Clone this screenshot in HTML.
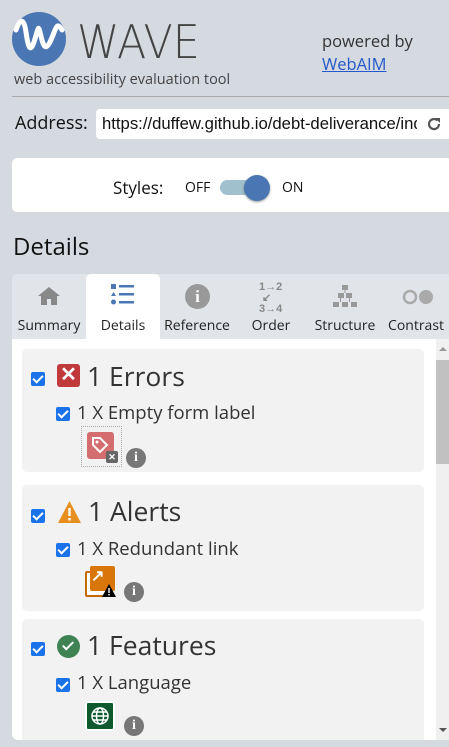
<!DOCTYPE html>
<html><head><style>
*{margin:0;padding:0;box-sizing:border-box}
body{width:449px;height:747px;overflow:hidden;background:#d5d9e0;font-family:"Open Sans","DejaVu Sans","Liberation Sans",sans-serif;color:#333;position:relative}
.a{position:absolute}
.cb{position:absolute;width:14px;height:14px;background:#1a73e8;border-radius:2px}
.cb:after{content:"";position:absolute;left:4px;top:1px;width:4px;height:8px;border:solid #fff;border-width:0 2px 2px 0;transform:rotate(45deg)}
.card{position:absolute;left:10px;width:402px;background:#f2f2f2;border-radius:5px}
.h{position:absolute;font-size:26.5px;color:#333}
.s{position:absolute;font-size:18.5px;color:#333}
.info{position:absolute;width:20px;height:20px;border-radius:50%;background:#777;color:#fff;font:bold 14px "Liberation Serif",serif;text-align:center;line-height:20px}
.tab{position:absolute;top:274px;height:65px;font-size:14px;text-align:center;color:#222}
.tab span{position:absolute;left:0;right:0;top:42px}
#c{position:absolute;left:12px;top:339px;width:424px;height:401px;background:#fff;border-radius:0 0 0 6px;overflow:hidden}
#c>*{margin-top:-339px}
</style></head><body>
<svg class="a" style="left:12px;top:12px" width="54" height="54" viewBox="0 0 54 54"><circle cx="27" cy="27" r="27" fill="#4a77b4"/><path d="M4 18 C8 6 12 6 14 20 S18 42 22 30 S26 12 28 20 S32 42 38 30 S44 8 50 18" stroke="#fff" stroke-width="5" fill="none" stroke-linecap="round"/></svg>
<div class="a" style="left:77px;top:15px;font-size:46px;color:#444;font-family:'DejaVu Sans','Liberation Sans',sans-serif;font-weight:200;transform:scaleX(0.93);transform-origin:left">WAVE</div>
<div class="a" style="left:14px;top:70px;font-size:14.5px;color:#444">web accessibility evaluation tool</div>
<div class="a" style="left:322px;top:29px;font-size:16.5px;color:#333">powered by</div>
<div class="a" style="left:322px;top:52px;font-size:16.5px;color:#2558c8;text-decoration:underline">WebAIM</div>
<div class="a" style="left:12px;top:96px;width:437px;height:1px;background:#aaa"></div>
<div class="a" style="left:15px;top:111px;font-size:18px;color:#111">Address:</div>
<div class="a" style="left:96px;top:109px;width:360px;height:30px;background:#fff;border-radius:4px"></div>
<div class="a" style="left:102px;top:114px;width:315px;overflow:hidden;white-space:nowrap;font:16.7px 'Liberation Sans',sans-serif;color:#111">https://duffew.github.io/debt-deliverance/index</div>
<svg class="a" style="left:426px;top:116px" width="16" height="16" viewBox="0 0 16 16"><path d="M13 8 A5 5 0 1 1 11.5 4.5" fill="none" stroke="#555" stroke-width="2.2"/><path d="M9 2 H14 V7Z" fill="#555"/></svg>
<div class="a" style="left:12px;top:158px;width:440px;height:54px;background:#fff;border-radius:5px"></div>
<div class="a" style="left:113px;top:176px;font-size:17px;color:#111">Styles:</div>
<div class="a" style="left:185px;top:178px;font-size:14px;color:#111">OFF</div>
<div class="a" style="left:220px;top:180px;width:46px;height:15px;background:#9fc0cc;border-radius:8px"></div>
<div class="a" style="left:244px;top:175px;width:26px;height:26px;background:#4a77b4;border-radius:50%;box-shadow:0 1px 2px rgba(0,0,0,.4)"></div>
<div class="a" style="left:282px;top:178px;font-size:14px;color:#111">ON</div>
<div class="a" style="left:13px;top:230px;font-size:24px;color:#111">Details</div>
<div class="a" style="left:12px;top:274px;width:437px;height:65px;background:#e1e4e9;border-radius:5px 0 0 0"></div>
<div class="a" style="left:86px;top:274px;width:74px;height:66px;background:#fff;border-radius:5px 5px 0 0"></div>
<div class="tab" style="left:12px;width:74px"><svg class="a" style="left:25px;top:12px" width="24" height="20" viewBox="0 0 24 20"><path d="M12 1 L1 10 H4 V19 H10 V13 H14 V19 H20 V10 H23Z" fill="#888"/></svg><span>Summary</span></div>
<div class="tab" style="left:86px;width:74px"><svg class="a" style="left:24px;top:9px" width="26" height="24" viewBox="0 0 26 24"><rect x="1" y="1" width="5" height="5" fill="#4a77b4"/><path d="M3.5 9 L6 13 H1Z" fill="#4a77b4"/><circle cx="3.5" cy="19" r="2.5" fill="#4a77b4"/><rect x="9" y="2" width="15" height="2.5" fill="#4a77b4"/><rect x="9" y="10" width="15" height="2.5" fill="#4a77b4"/><rect x="9" y="18" width="15" height="2.5" fill="#4a77b4"/></svg><span>Details</span></div>
<div class="tab" style="left:160px;width:74px"><div class="info" style="left:25px;top:10px;width:25px;height:25px;line-height:25px;background:#999;font-size:17px">i</div><span>Reference</span></div>
<div class="tab" style="left:234px;width:74px"><div class="a" style="left:25px;top:8px;font:bold 11px 'Liberation Sans',sans-serif;color:#888;line-height:11px;text-align:left">1&rarr;2<br>&nbsp;&#x2199;<br>3&rarr;4</div><span>Order</span></div>
<div class="tab" style="left:308px;width:74px"><svg class="a" style="left:24px;top:11px" width="26" height="24" viewBox="0 0 26 24"><g fill="#999"><rect x="10" y="0" width="6" height="5"/><rect x="6" y="8" width="6" height="5"/><rect x="14" y="8" width="6" height="5"/><rect x="1" y="17" width="6" height="5"/><rect x="10" y="17" width="6" height="5"/><rect x="19" y="17" width="6" height="5"/><rect x="12.5" y="5" width="1" height="3"/><rect x="8" y="13" width="1" height="4"/><rect x="17" y="13" width="1" height="4"/></g></svg><span>Structure</span></div>
<div class="tab" style="left:382px;width:80px;text-align:left"><svg class="a" style="left:20px;top:15px" width="32" height="16"><circle cx="8" cy="8" r="6" fill="none" stroke="#aaa" stroke-width="2.5"/><circle cx="24" cy="8" r="7" fill="#aaa"/></svg><span style="left:6px">Contrast</span></div>
<div class="a" style="left:436px;top:339px;width:13px;height:401px;background:#f0f0f0"></div>
<div class="a" style="left:436px;top:360px;width:13px;height:104px;background:#c1c1c1"></div>
<div class="a" style="left:439px;top:347px;width:0;height:0;border:4px solid transparent;border-bottom-color:#999;border-top:0"></div>
<div class="a" style="left:439px;top:728px;width:0;height:0;border:4px solid transparent;border-top-color:#555;border-bottom:0"></div>

<div id="c"><div style="position:relative;left:-12px">
<div class="card" style="left:22px;top:349px;height:123px"></div>
<div class="cb" style="left:31px;top:372px"></div>
<div class="a" style="left:57px;top:364px;width:23px;height:23px;background:#c0393b;border-radius:3px;color:#fff;font:bold 20px 'Liberation Sans',sans-serif;text-align:center;line-height:23px">&#x2715;</div>
<div class="h" style="left:87px;top:358px">1 Errors</div>
<div class="cb" style="left:56px;top:407px"></div>
<div class="s" style="left:77px;top:400px">1 X Empty form label</div>
<div class="a" style="left:81px;top:426px;width:41px;height:41px;border:1px dotted #aaa"></div>
<div class="a" style="left:87px;top:432px;width:27px;height:27px;background:#d36d6f;border-radius:3px"></div>
<svg class="a" style="left:90px;top:435px" width="20" height="20"><path d="M3 3 H10 L17 10 L10 17 L3 10Z" fill="none" stroke="#fff" stroke-width="2"/><circle cx="7" cy="7" r="1.5" fill="#fff"/></svg>
<div class="a" style="left:106px;top:451px;width:12px;height:12px;background:#666;border-radius:2px;color:#fff;font:bold 9px sans-serif;text-align:center;line-height:12px">&#x2715;</div>
<div class="info" style="left:126px;top:448px">i</div>

<div class="card" style="left:22px;top:485px;height:126px"></div>
<div class="cb" style="left:31px;top:509px"></div>
<svg class="a" style="left:57px;top:500px" width="25" height="24"><path d="M12.5 1 L24 23 H1Z" fill="#e8901f"/><rect x="11.3" y="8" width="2.4" height="8" fill="#fff"/><rect x="11.3" y="18" width="2.4" height="2.4" fill="#fff"/></svg>
<div class="h" style="left:88px;top:493px">1 Alerts</div>
<div class="cb" style="left:56px;top:543px"></div>
<div class="s" style="left:77px;top:536px">1 X Redundant link</div>
<div class="a" style="left:85px;top:571px;width:26px;height:26px;border:2px solid #c46a00;border-radius:2px;background:#fff"></div>
<div class="a" style="left:90px;top:566px;width:25px;height:25px;background:#d9760a;border-radius:2px"></div>
<div class="a" style="left:91px;top:566px;font:bold 16px sans-serif;color:#fff">&#x2197;</div>
<svg class="a" style="left:102px;top:584px" width="14" height="13"><path d="M7 0 L14 13 H0Z" fill="#000"/><rect x="6.3" y="4" width="1.4" height="5" fill="#fff"/><rect x="6.3" y="10" width="1.4" height="1.4" fill="#fff"/></svg>
<div class="info" style="left:124px;top:582px">i</div>

<div class="card" style="left:22px;top:619px;height:130px"></div>
<div class="cb" style="left:31px;top:642px"></div>
<div class="a" style="left:57px;top:635px;width:23px;height:23px;background:#3f8355;border-radius:50%"></div>
<div class="a" style="left:65px;top:639px;width:6px;height:11px;border:solid #fff;border-width:0 2.5px 2.5px 0;transform:rotate(45deg)"></div>
<div class="h" style="left:87px;top:627px">1 Features</div>
<div class="cb" style="left:56px;top:678px"></div>
<div class="s" style="left:77px;top:670px">1 X Language</div>
<div class="a" style="left:85px;top:701px;width:30px;height:30px;background:#0e5a2e;border:2px solid #fff;border-radius:3px"></div>
<svg class="a" style="left:90px;top:706px" width="20" height="20"><g fill="none" stroke="#fff" stroke-width="1.5"><circle cx="10" cy="10" r="8"/><ellipse cx="10" cy="10" rx="3.5" ry="8"/><path d="M2 10H18M3.5 6H16.5M3.5 14H16.5"/></g></svg>
<div class="info" style="left:124px;top:716px">i</div>
</div></div>
</body></html>
